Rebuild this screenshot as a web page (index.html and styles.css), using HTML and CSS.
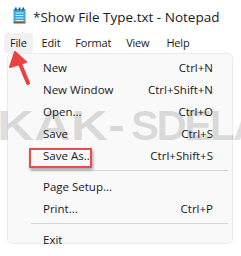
FILE: index.html
```html
<!DOCTYPE html>
<html lang="en">
  <head>
    <meta charset="UTF-8" />
    <title>Notepad File menu</title>
    <link rel="stylesheet" href="styles.css">
  </head>
  <body>
    <div class="stage">
      <div class="titlebar">
        <svg class="appicon" width="13" height="17" viewBox="0 0 13 17">
          <rect x="0.5" y="2" width="12" height="14" fill="#3aa6e0"/>
          <rect x="0.5" y="15" width="12" height="1.5" fill="#8a5a2b"/>
          <rect x="2" y="0.5" width="1.6" height="3" fill="#1c5a8a"/>
          <rect x="5.7" y="0.5" width="1.6" height="3" fill="#1c5a8a"/>
          <rect x="9.4" y="0.5" width="1.6" height="3" fill="#1c5a8a"/>
          <rect x="2.5" y="5.5" width="8" height="1" fill="#d8efff"/>
          <rect x="2.5" y="8" width="8" height="1" fill="#d8efff"/>
          <rect x="2.5" y="10.5" width="8" height="1" fill="#d8efff"/>
          <rect x="2.5" y="13" width="8" height="1" fill="#d8efff"/>
        </svg>
        <span class="title">*Show File Type.txt - Notepad</span>
      </div>
      <div class="menubar">
        <span class="menu active">File</span>
        <span class="menu">Edit</span>
        <span class="menu">Format</span>
        <span class="menu">View</span>
        <span class="menu help">Help</span>
      </div>
      <div class="dropdown">
        <div class="item"><span>New</span><span>Ctrl+N</span></div>
        <div class="item"><span>New Window</span><span>Ctrl+Shift+N</span></div>
        <div class="item"><span>Open...</span><span>Ctrl+O</span></div>
        <div class="item"><span>Save</span><span>Ctrl+S</span></div>
        <div class="item"><span>Save As..</span><span>Ctrl+Shift+S</span></div>
        <div class="sep"></div>
        <div class="item"><span>Page Setup...</span><span></span></div>
        <div class="item"><span>Print...</span><span>Ctrl+P</span></div>
        <div class="sep"></div>
        <div class="item"><span>Exit</span><span></span></div>
      </div>
      <div class="watermark"><span class="wide">KAK-</span><span class="rest">SDELAT</span></div>
      <div class="highlight"></div>
      <svg class="arrow" width="40" height="45" viewBox="0 0 40 45">
        <line x1="28" y1="38" x2="18" y2="14" stroke="#ec4141" stroke-width="4" stroke-linecap="round"/>
        <polygon points="15,7 10,22 26,17" fill="#ec4141" stroke="#ec4141" stroke-width="2" stroke-linejoin="round"/>
      </svg>
    </div>
  </body>
</html>
```

FILE: styles.css
```css
body {
  margin: 0;
  background: #fff;
  font-family: "Open Sans", "Noto Sans", sans-serif;
  color: #1a1a1a;
}
.stage {
  position: relative;
  width: 241px;
  height: 256px;
  overflow: hidden;
}
.titlebar {
  height: 33px;
  display: flex;
  align-items: center;
  padding-left: 13px;
  gap: 7px;
}
.appicon {
  margin-top: -2px;
}
.title {
  font-size: 13.5px;
}
.menubar {
  height: 20px;
  display: flex;
  align-items: center;
  padding-left: 4px;
  font-size: 11px;
  letter-spacing: -0.2px;
}
.menu {
  padding: 2px 6px;
  margin-right: 3px;
  line-height: 16px;
  border-radius: 3px;
}
.menu.help {
  margin-left: 2px;
}
.menu.active {
  background: #f1f1f1;
}
.dropdown {
  margin-left: 7px;
  width: 226px;
  background: #f9f9f9;
  border: 1px solid #ececec;
  border-radius: 5px;
  padding: 2px 0 0;
  height: 191px;
  box-sizing: border-box;
  font-size: 11.5px;
}
.item {
  height: 22px;
  display: flex;
  align-items: center;
  justify-content: space-between;
  padding: 0 19px 0 35px;
}
.sep {
  height: 1px;
  background: #d6d6d6;
  margin: 4px 4px 4px 23px;
}
.watermark {
  position: absolute;
  left: -3px;
  top: 102px;
  display: flex;
  font-family: "Liberation Sans", sans-serif;
  font-weight: bold;
  font-size: 42px;
  color: rgba(0, 0, 0, 0.13);
  white-space: nowrap;
}
.watermark .wide {
  width: 134px;
  transform: scaleX(1.22);
  transform-origin: left center;
}
.watermark .rest {
  letter-spacing: -2.5px;
}
.highlight {
  position: absolute;
  left: 29px;
  top: 148px;
  width: 59px;
  height: 16px;
  border: 2px solid #ea4b4b;
  box-shadow: 1px 2px 3px rgba(0, 0, 0, 0.35);
}
.arrow {
  position: absolute;
  left: 0;
  top: 45px;
}
```
